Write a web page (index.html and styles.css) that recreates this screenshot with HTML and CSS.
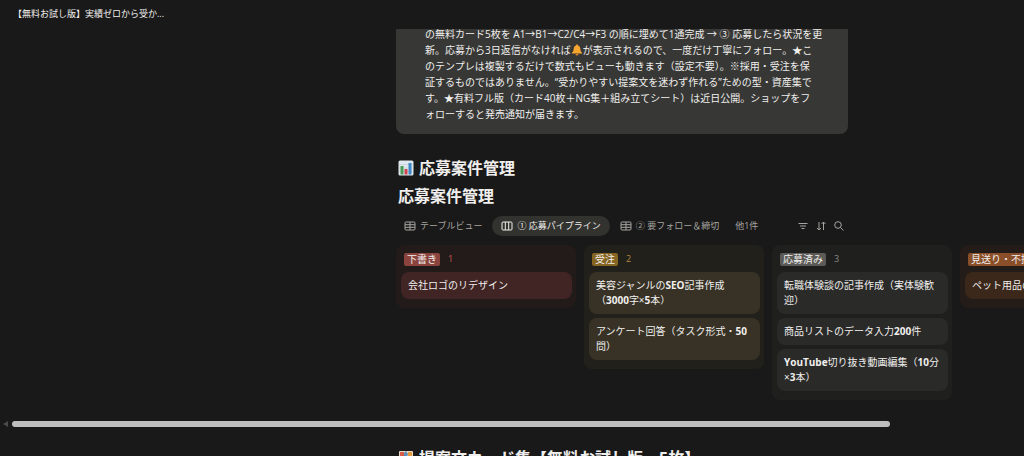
FILE: index.html
```html
<!DOCTYPE html>
<html lang="ja">
<head>
  <meta charset="UTF-8" />
  <meta name="viewport" content="width=device-width, initial-scale=1.0">
  <title>【無料お試し版】</title>
  <link rel="stylesheet" href="styles.css">
</head>
<body>
  <header class="topbar">【無料お試し版】実績ゼロから受か...</header>

  <main class="page">
    <p class="callout">
      の無料カード5枚を A1→B1→C2/C4→F3 の順に埋めて1通完成 → ③ 応募したら状況を更<br>
      新。応募から3日返信がなければ<svg class="bell" viewBox="0 0 12 12"><path d="M6 .5c.7 0 1 .4 1 1C8.8 2 9.300 3.600 9.400 5.500c.1 1.700.6 2.300 1.600 3v1H1v-1c1-.7 1.500-1.300 1.600-3C2.700 3.600 3.200 2 5 1.500c0-.6.3-1 1-1z" fill="#f9a630"/><path d="M4.500 10h3a1.500 1.500 0 0 1-3 0z" fill="#d9822b"/></svg>が表示されるので、一度だけ丁寧にフォロー。★こ<br>
      のテンプレは複製するだけで数式もビューも動きます（設定不要）。※採用・受注を保<br>
      証するものではありません。“受かりやすい提案文を迷わず作れる”ための型・資産集で<br>
      す。★有料フル版（カード40枚＋NG集＋組み立てシート）は近日公開。ショップをフ<br>
      ォローすると発売通知が届きます。
    </p>

    <h2 class="section-title">
      <svg class="emoji" viewBox="0 0 16 16"><rect x=".5" y=".5" width="15" height="15" rx="1.500" fill="#dfe8ee"/><path d="M1 4.500h14M1 8h14M1 11.500h14" stroke="#bccbd6" stroke-width=".6"/><rect x="2.500" y="6" width="3" height="8.500" fill="#4b9b57"/><rect x="6.500" y="9" width="3" height="5.500" fill="#cf4250"/><rect x="10.500" y="3" width="3" height="11.500" fill="#3f86c6"/></svg>
      応募案件管理
    </h2>
    <h3 class="db-title">応募案件管理</h3>

    <div class="toolbar">
      <button class="tab">
        <svg class="icon" viewBox="0 0 12 12"><rect x="1" y="2" width="10" height="8" rx="1"/><path d="M1 4.700h10M1 7.300h10M6 2v8"/></svg>
        テーブルビュー
      </button>
      <button class="tab active">
        <svg class="icon" viewBox="0 0 12 12"><rect x="1" y="2" width="10" height="8" rx="1"/><path d="M4.300 2v8M7.700 2v8"/></svg>
        ① 応募パイプライン
      </button>
      <button class="tab">
        <svg class="icon" viewBox="0 0 12 12"><rect x="1" y="2" width="10" height="8" rx="1"/><path d="M1 4.700h10M1 7.300h10M6 2v8"/></svg>
        ② 要フォロー＆締切
      </button>
      <button class="more">他1件</button>
      <div class="tools">
        <button class="tool" aria-label="フィルター"><svg class="icon" viewBox="0 0 12 12"><path d="M1.500 3.500h9M3 6h6M4.500 8.500h3"/></svg></button>
        <button class="tool" aria-label="並べ替え"><svg class="icon" viewBox="0 0 12 12"><path d="M4 2v8M2 8l2 2 2-2M8.500 10V2M6.500 4l2-2 2 2"/></svg></button>
        <button class="tool" aria-label="検索"><svg class="icon" viewBox="0 0 12 12"><circle cx="5" cy="5" r="3.300"/><path d="M7.500 7.500l3 3"/></svg></button>
      </div>
    </div>

    <div class="board">
      <section class="column red">
        <div class="column-head"><span class="tag">下書き</span><span class="count">1</span></div>
        <div class="card">会社ロゴのリデザイン</div>
      </section>
      <section class="column yellow">
        <div class="column-head"><span class="tag">受注</span><span class="count">2</span></div>
        <div class="card">美容ジャンルの<b>SEO</b>記事作成<br>（<b>3000</b>字×<b>5</b>本）</div>
        <div class="card">アンケート回答（タスク形式・<b>50</b><br>問）</div>
      </section>
      <section class="column gray">
        <div class="column-head"><span class="tag">応募済み</span><span class="count">3</span></div>
        <div class="card">転職体験談の記事作成（実体験歓<br>迎）</div>
        <div class="card">商品リストのデータ入力<b>200</b>件</div>
        <div class="card"><b>YouTube</b>切り抜き動画編集（<b>10</b>分<br>×<b>3</b>本）</div>
      </section>
      <section class="column orange">
        <div class="column-head"><span class="tag">見送り・不採用</span></div>
        <div class="card">ペット用品の</div>
      </section>
    </div>
  </main>

  <div class="scrollbar">
    <span class="arrow"></span>
    <span class="thumb"></span>
  </div>

  <div class="page">
    <h2 class="section-title">
      <svg class="emoji" viewBox="0 0 16 16"><rect x="1" y="1" width="14" height="14" rx="1" fill="#e9dcc8"/><path d="M2 2h4v4H2z" fill="#d85c4a"/><path d="M10 2h4v4h-4z" fill="#e79a3c"/><path d="M6 3l2-2 2 3-1 3-3 1z" fill="#5b8fb5"/><path d="M3 8h4v5H3z" fill="#4b86b8"/><path d="M9 8h4v5H9z" fill="#c9503f"/></svg>
      提案文カード集【無料お試し版・5枚】
    </h2>
  </div>
</body>
</html>
```

FILE: styles.css
```css
* {
  box-sizing: border-box;
}

body {
  margin: 0;
  height: 100vh;
  overflow: hidden;
  background: #191919;
  color: #f0efed;
  font-family: "Open Sans", "Noto Sans CJK JP", sans-serif;
  font-size: 10px;
  line-height: 16px;
}

button {
  border: none;
  background: none;
  padding: 0;
  color: inherit;
  font: inherit;
  cursor: pointer;
}

.topbar {
  position: fixed;
  top: 0;
  left: 0;
  right: 0;
  height: 29px;
  padding-left: 13px;
  background: #191919;
  font-size: 9px;
  line-height: 28px;
}

.page {
  padding-left: 396px;
  overflow: hidden;
  white-space: nowrap;
}

.callout {
  max-width: 452px;
  margin: 0 0 24px;
  padding: 26px 14px 12px 29px;
  background: #373735;
  border-radius: 8px;
}

.bell {
  width: 12px;
  height: 12px;
  vertical-align: -2px;
}

.section-title,
.db-title {
  display: flex;
  align-items: center;
  gap: 5px;
  margin: 0;
  padding-left: 2px;
  font-size: 16px;
  line-height: 20px;
}

.db-title {
  margin-top: 8px;
}

.emoji {
  width: 16px;
  height: 16px;
}

.toolbar {
  display: flex;
  align-items: center;
  margin: 10px 0 9px;
  color: #a5a4a0;
  font-size: 9px;
}

.tab {
  display: flex;
  align-items: center;
  gap: 4px;
  height: 20px;
  margin-right: 2px;
  padding: 0 8px;
  border-radius: 10px;
}

.tab.active {
  padding: 0 9px;
  background: #32322f;
  color: #f0efed;
}

.icon {
  width: 12px;
  height: 12px;
  fill: none;
  stroke: currentColor;
}

.more {
  margin-left: 6px;
}

.tools {
  display: flex;
  gap: 6px;
  margin-left: 39px;
}

.tool {
  display: flex;
}

.board {
  display: flex;
  align-items: flex-start;
  gap: 8px;
  height: 175px;
}

.column {
  display: flex;
  flex-direction: column;
  flex: 0 0 180px;
  gap: 4px;
  padding: 5px 4px 9px 5px;
  border-radius: 8px;
}

.column-head {
  display: flex;
  align-items: center;
  gap: 8px;
  height: 18px;
  padding-left: 3px;
}

.tag {
  padding: 0 3px;
  border-radius: 2px;
  line-height: 13px;
}

.count {
  font-size: 9px;
}

.card {
  padding: 6px 7px;
  border-radius: 8px;
  line-height: 15px;
}

.red {
  background: #221b1a;
}

.red .tag {
  background: #8b443d;
}

.red .count {
  color: #c85a50;
}

.red .card {
  background: #412424;
}

.yellow {
  background: #21201a;
}

.yellow .tag {
  background: #866422;
}

.yellow .count {
  color: #b58a3a;
}

.yellow .card {
  background: #373225;
}

.gray {
  background: #1f1f1e;
}

.gray .tag {
  background: #5b5a56;
}

.gray .count {
  color: #8a8985;
}

.gray .card {
  background: #2a2a29;
}

.orange {
  background: #231c18;
}

.orange .tag {
  background: #8a4e28;
}

.orange .card {
  background: #3c281b;
}

.scrollbar {
  display: flex;
  align-items: center;
  gap: 4px;
  height: 8px;
  margin-bottom: 20px;
  padding-left: 3px;
}

.arrow {
  border: 3px solid transparent;
  border-left: none;
  border-right: 5px solid #4a4a4a;
}

.thumb {
  width: 86%;
  height: 6px;
  border-radius: 3px;
  background: #bebebe;
}
```
